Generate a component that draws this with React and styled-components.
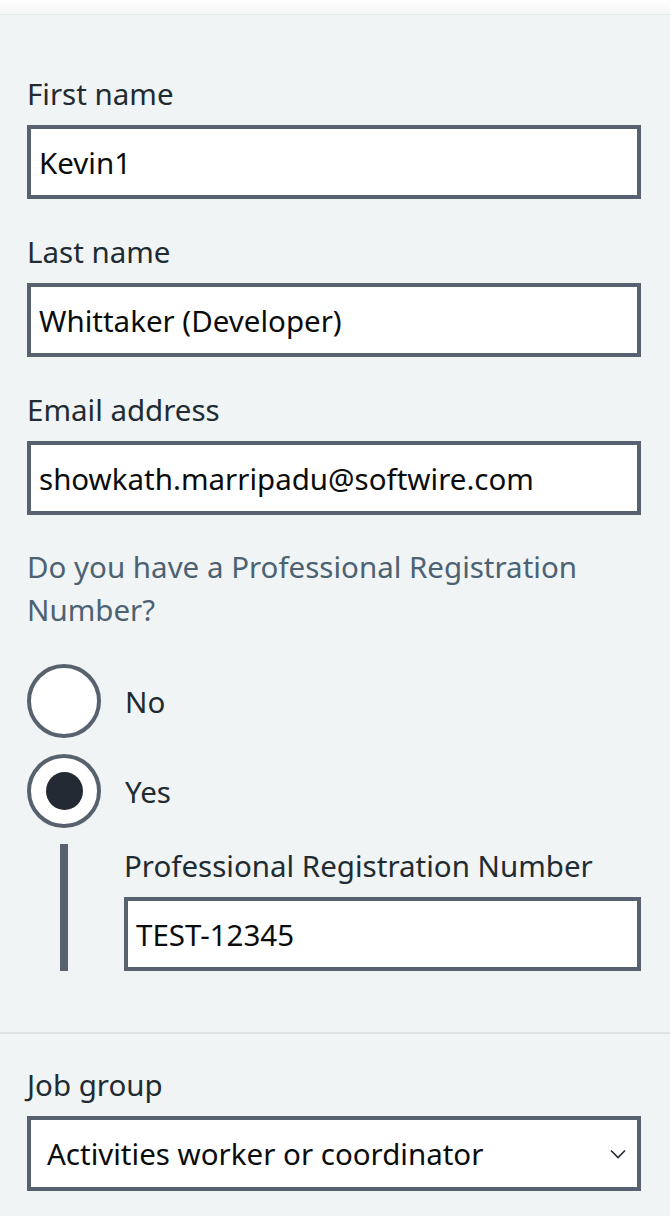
import React from 'react'
import styled, { createGlobalStyle } from 'styled-components'

const GlobalStyle = createGlobalStyle`
  html, body {
    margin: 0;
    padding: 0;
    background: #f0f4f5;
  }
  body {
    font-family: 'Noto Sans', 'Open Sans', Arial, sans-serif;
    color: #212b32;
  }
`

const TopStrip = styled.div`
  height: 14px;
  background: linear-gradient(#ffffff, #f6f6f6);
  border-bottom: 1px solid #e6e9ea;
`

const Page = styled.div`
  padding: 59px 29px 0 27px;
`

const Group = styled.div`
  display: flex;
  flex-direction: column;
  margin-bottom: ${p => p.gap || 33}px;
`

const Label = styled.label`
  font-size: 29.5px;
  line-height: 40px;
  margin-bottom: 11px;
  color: #212b32;
`

const TextInput = styled.input`
  box-sizing: border-box;
  width: 100%;
  height: 74px;
  border: 4px solid #58626f;
  border-radius: 0;
  background: #fff;
  padding: 0 8px;
  font-family: inherit;
  font-size: 29.5px;
  color: #0b0c0c;
  outline: none;
`

const Legend = styled.div`
  font-size: 29.5px;
  line-height: 43px;
  color: #4c6272;
  margin-bottom: 33px;
`

const RadioRow = styled.div`
  display: flex;
  align-items: center;
  gap: 24px;
  margin-bottom: 16px;
`

const Circle = styled.span`
  box-sizing: border-box;
  width: 74px;
  height: 74px;
  border: 4px solid #58626f;
  border-radius: 50%;
  background: #fff;
  display: flex;
  align-items: center;
  justify-content: center;
  flex-shrink: 0;
`

const Dot = styled.span`
  width: 37px;
  height: 38px;
  border-radius: 50%;
  background: #242a33;
`

const RadioText = styled.span`
  font-size: 29.5px;
  color: #212b32;
`

const Conditional = styled.div`
  margin-left: 33px;
  border-left: 8px solid #58626f;
  padding-left: 56px;
  display: flex;
  flex-direction: column;
  margin-bottom: 61px;
`

const CondLabel = styled(Label)`
  margin-top: 2px;
`

const Divider = styled.hr`
  border: 0;
  border-top: 2px solid #dde2e4;
  margin: 0 -29px 31px -27px;
`

const SelectBox = styled.div`
  box-sizing: border-box;
  height: 75px;
  border: 4px solid #58626f;
  background: #fff;
  display: flex;
  align-items: center;
  justify-content: space-between;
  padding: 0 11px 0 16px;
  font-size: 29.5px;
  color: #0b0c0c;
`

const Chevron = () => (
  <svg width="16" height="10" viewBox="0 0 16 10" fill="none">
    <path d="M1 1.5 L8 8.5 L15 1.5" stroke="#212b32" strokeWidth="1.6" />
  </svg>
)

export default function App() {
  return (
    <>
      <GlobalStyle />
      <TopStrip />
      <Page>
        <Group>
          <Label>First name</Label>
          <TextInput defaultValue="Kevin1" />
        </Group>
        <Group>
          <Label>Last name</Label>
          <TextInput defaultValue="Whittaker (Developer)" />
        </Group>
        <Group gap={30}>
          <Label>Email address</Label>
          <TextInput defaultValue="showkath.marripadu@softwire.com" />
        </Group>
        <Legend>Do you have a Professional Registration Number?</Legend>
        <RadioRow>
          <Circle />
          <RadioText>No</RadioText>
        </RadioRow>
        <RadioRow>
          <Circle>
            <Dot />
          </Circle>
          <RadioText>Yes</RadioText>
        </RadioRow>
        <Conditional>
          <CondLabel>Professional Registration Number</CondLabel>
          <TextInput defaultValue="TEST-12345" />
        </Conditional>
        <Divider />
        <Group>
          <Label>Job group</Label>
          <SelectBox>
            <span>Activities worker or coordinator</span>
            <Chevron />
          </SelectBox>
        </Group>
      </Page>
    </>
  )
}
